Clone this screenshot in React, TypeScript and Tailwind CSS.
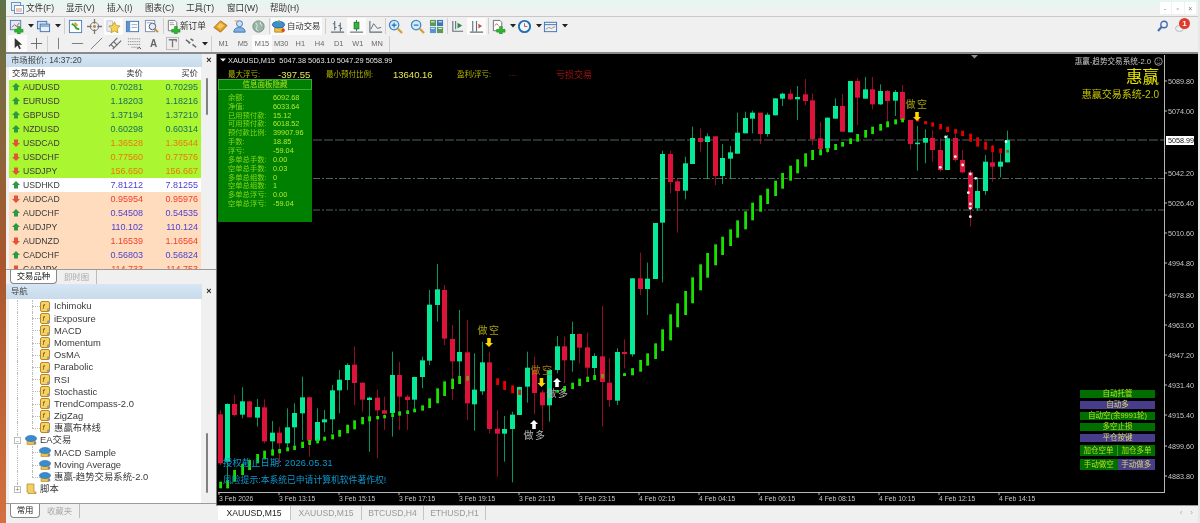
import React from "react";

type C = [number, "g" | "r", number, number, number, number];
// candles read from the chart: X, colour, body top, body bottom, high, low (zoom coordinates)
const A: C[] = [[10,"r",553,700,540,705],[30,"g",522,695,520,775],[52,"r",522,555,495,560],[75,"g",514,554,472,565],[97,"r",514,562,514,562],[120,"g",531,563,507,590],[142,"r",532,634,508,640],[165,"g",608,634,573,660],[187,"r",608,640,590,700],[210,"g",592,640,535,655],[232,"g",549,592,520,650],[255,"g",502,550,440,630],[277,"r",502,632,500,680],[300,"g",576,632,535,640],[322,"g",568,577,540,605],[345,"g",481,568,465,610],[367,"g",449,481,420,550],[390,"g",405,450,400,480],[412,"r",404,459,350,525],[435,"r",458,509,458,545],[457,"g",503,510,500,665],[480,"r",503,541,478,685],[502,"r",541,551,500,600],[525,"g",435,549,365,620],[547,"r",435,500,395,600],[570,"r",500,510,495,600],[592,"g",441,509,440,545],[615,"g",391,441,380,475],[637,"g",224,392,180,405],[660,"g",178,225,102,275],[682,"r",180,326,165,345],[705,"r",327,394,285,510],[727,"g",366,394,240,460],[750,"r",367,520,270,570],[772,"g",479,523,370,602],[795,"g",397,484,335,495],[817,"r",397,597,365,610],[840,"r",596,611,540,740],[862,"g",597,611,558,695],[885,"g",554,597,545,757],[907,"g",471,555,470,555],[930,"g",413,470,365,518],[952,"r",420,489,380,553],[975,"r",487,526,480,600],[997,"g",420,526,420,575],[1020,"g",349,420,318,430],[1042,"r",349,391,320,460],[1065,"g",312,391,275,425],[1087,"r",312,353,310,400],[1110,"r",352,413,308,455],[1132,"g",378,414,370,450],[1155,"r",379,456,228,590],[1177,"r",458,510,385,530],[1200,"g",366,512,355,525],[1222,"r",366,372,328,415],[1245,"g",145,373,145,380]];
const B: C[] = [[86,"r",595,627,518,645],[108,"g",596,627,548,705],[131,"g",429,597,429,597],[153,"g",222,428,212,607],[176,"r",222,306,212,340],[198,"r",304,333,295,458],[221,"g",250,332,230,358],[243,"g",174,252,140,252],[266,"r",174,186,145,215],[288,"g",169,186,160,296],[311,"r",169,288,168,315],[333,"g",234,288,192,312],[356,"g",217,236,198,296],[378,"g",158,221,98,221],[401,"g",114,160,95,160],[423,"g",98,116,92,160],[446,"r",98,162,98,192],[468,"g",104,162,98,170],[491,"g",55,106,55,106],[513,"g",41,56,38,78],[536,"r",41,58,28,60],[558,"g",51,58,18,120],[581,"r",43,63,-3,75],[603,"r",61,177,40,195],[626,"r",175,207,125,220],[648,"g",113,205,113,218],[671,"g",78,116,55,116],[693,"r",78,155,42,155],[716,"g",3,157,3,157],[738,"r",3,53,-6,135],[761,"g",28,56,-9,56],[783,"r",28,73,-9,88],[806,"g",33,73,13,75],[828,"r",33,63,30,125],[851,"g",36,62,30,108],[873,"r",36,120,15,125]];
const D: C[] = [[86,"r",90,162,90,180],[108,"g",158,161,108,242],[131,"g",144,158,118,220],[153,"r",144,180,120,215],[176,"r",180,240,145,245],[198,"g",145,240,135,240],[221,"r",144,210,130,215],[243,"r",210,247,180,250],[266,"r",247,355,240,410],[288,"g",303,355,262,362],[311,"g",215,303,195,315],[333,"r",217,230,165,275],[356,"g",215,230,190,262],[378,"g",150,217,122,217]];
type Da = [number, number, number];
const DA: Da[] = [[8,755,775],[30,750,775],[52,720,755],[75,702,735],[97,690,720],[120,672,700],[142,662,688],[165,658,677],[187,657,670],[210,652,664],[232,647,660],[255,635,654],[277,630,645],[300,628,640],[322,620,632],[345,613,628],[367,600,620],[390,584,610],[412,571,598],[435,561,583],[457,559,574],[480,558,568],[502,555,565],[525,550,561],[547,544,557],[570,541,552],[592,536,547],[615,526,542],[637,505,534],[660,475,520],[682,454,498],[705,446,477],[727,438,462],[1020,480,488],[1042,468,485],[1065,458,477],[1087,446,468],[1110,440,456],[1132,435,450],[1222,430,438],[1245,415,436]];
const DAR: Da[] = [[840,445,465],[862,453,480],[885,466,490]];
const DB: Da[] = [[40,880,888],[63,865,885],[86,840,875],[108,820,857],[131,790,837],[153,748,813],[176,703,781],[198,670,742],[221,633,705],[243,592,670],[266,553,631],[288,519,593],[311,493,556],[333,470,525],[356,448,498],[378,421,473],[401,394,448],[423,368,421],[446,346,395],[468,326,372],[491,302,348],[513,279,326],[536,257,302],[558,238,280],[581,220,260],[603,210,240],[626,208,226],[648,205,216],[671,192,210],[693,186,200],[716,175,192],[738,162,185],[761,150,173],[783,140,162],[806,132,152],[828,124,142],[851,118,133],[873,115,127]];
const DD: Da[] = [[108,88,95],[131,93,103],[153,97,110],[176,102,118],[198,110,126],[221,117,131],[243,122,138],[266,131,155],[288,142,170],[311,155,179],[333,167,186],[356,175,190]];
const WHITE = [[194,141],[178,232],[223,200],[245,225],[268,252],[268,288],[262,308],[268,342],[268,355],[268,380],[284,265],[375,155]];
const PRICES: [string, number][] = [["5089.80",81],["5074.00",111],["5042.20",173],["5026.40",203],["5010.60",233],["4994.80",263],["4978.80",295],["4963.00",325],["4947.20",355],["4931.40",385],["4915.40",415],["4899.60",446],["4883.80",476]];
const TIMES = ["3 Feb 2026","3 Feb 13:15","3 Feb 15:15","3 Feb 17:15","3 Feb 19:15","3 Feb 21:15","3 Feb 23:15","4 Feb 02:15","4 Feb 04:15","4 Feb 06:15","4 Feb 08:15","4 Feb 10:15","4 Feb 12:15","4 Feb 14:15"];

const Candle = ({ c, ox, oy }: { c: C; ox: number; oy: number }) => {
  const x = Math.round(ox + c[0] / 3);
  const col = c[1] === "g" ? "#06ea98" : "#dc143c";
  const t = oy + c[2] / 3, b = oy + c[3] / 3;
  return (
    <g>
      <rect x={x} y={oy + c[4] / 3} width={1} height={(c[5] - c[4]) / 3} fill={col} opacity={0.65} />
      <rect x={x - 2} y={t} width={5} height={Math.max(1.5, b - t)} fill={col} />
    </g>
  );
};
const Dash = ({ d, ox, oy, col }: { d: Da; ox: number; oy: number; col: string }) => (
  <rect x={Math.round(ox + d[0] / 3) - 0.8} y={oy + d[1] / 3} width={2.8} height={(d[2] - d[1]) / 3} fill={col} />
);
const Arrow = ({ x, y, col, up }: { x: number; y: number; col: string; up?: boolean }) => (
  <path d={up ? `M${x} ${y - 5}l4 4h-2.2v5h-3.6v-5h-2.2z` : `M${x} ${y + 5}l4 -4h-2.2v-5h-3.6v5h-2.2z`} fill={col} />
);

function ChartDrawing() {
  return (
    <svg className="absolute inset-0" width={982} height={451} viewBox="216 54 982 451">
      {[140, 178.5, 210].map((y) => (
        <line key={y} x1={312} x2={1163} y1={y} y2={y} stroke="#6f8f7a" strokeWidth={1} strokeDasharray={y === 140 ? "9 2" : "7 2 2 2"} opacity={0.7} />
      ))}
      {A.map((c) => <Candle key={"a" + c[0]} c={c} ox={216} oy={230} />)}
      {B.map((c) => <Candle key={"b" + c[0]} c={c} ox={610} oy={80} />)}
      {D.map((c) => <Candle key={"d" + c[0]} c={c} ox={880} oy={90} />)}
      {DA.map((d) => <Dash key={"da" + d[0]} d={d} ox={216} oy={230} col="#18e000" />)}
      {DAR.map((d) => <Dash key={"dr" + d[0]} d={d} ox={216} oy={230} col="#e80000" />)}
      <Dash d={[750, 438, 452]} ox={216} oy={230} col="#8f8a20" />
      <Dash d={[907, 479, 495]} ox={216} oy={230} col="#c81818" />
      <Dash d={[1155, 432, 445]} ox={216} oy={230} col="#8f8a20" />
      {DB.map((d) => <Dash key={"db" + d[0]} d={d} ox={610} oy={80} col="#18e000" />)}
      {DD.map((d) => <Dash key={"dd" + d[0]} d={d} ox={880} oy={90} col="#e80000" />)}
      <Dash d={[378, 180, 188]} ox={880} oy={90} col="#a05030" />
      {WHITE.map((w) => <circle key={w[0] + "-" + w[1]} cx={880 + w[0] / 3} cy={90 + w[1] / 3} r={1.4} fill="#f4f4f4" />)}
      <Arrow x={488} y={342} col="#ffd800" />
      <Arrow x={540.5} y={382} col="#ffd800" />
      <Arrow x={916} y={116} col="#ffd800" />
      <Arrow x={533} y={425} col="#ffffff" up />
      <Arrow x={556} y={383} col="#ffffff" up />
      <text x={488} y={334} textAnchor="middle" fontSize={10} letterSpacing={1.5} fill="#a8a010">做空</text>
      <text x={541} y={374} textAnchor="middle" fontSize={10} letterSpacing={1.5} fill="#a8780c">做空</text>
      <text x={916} y={108} textAnchor="middle" fontSize={10} letterSpacing={1.5} fill="#a8a010">做空</text>
      <text x={534} y={439} textAnchor="middle" fontSize={10} letterSpacing={1.5} fill="#b4b4b4">做多</text>
      <text x={557} y={397} textAnchor="middle" fontSize={10} letterSpacing={1.5} fill="#b4b4b4">做多</text>
      <path d="M970 55h7l-3.5 3.5z" fill="#8a9094" />
      <path d="M219 58.5h6l-3 3z" fill="#f4f4f4" />
      <circle cx={1157.5} cy={61.5} r={3.8} fill="none" stroke="#b8b8b8" strokeWidth={0.8} />
      <path d="M1155.6 62.8q1.9 1.6 3.8 0M1156 60.2h.8M1158.3 60.2h.8" stroke="#b8b8b8" strokeWidth={0.7} fill="none" />
      <line x1={1163.5} x2={1163.5} y1={55} y2={492.5} stroke="#b8b8b8" />
      <line x1={217} x2={1164} y1={492.5} y2={492.5} stroke="#b8b8b8" />
      {PRICES.map(([t, y]) => (
        <g key={t}>
          <line x1={1164} x2={1166} y1={y} y2={y} stroke="#b8b8b8" />
          <text x={1167} y={y + 2.6} fontSize={7.2} fill="#c8c8c8">{t}</text>
        </g>
      ))}
      <rect x={1165} y={136} width={28} height={9} fill="#fff" />
      <text x={1167} y={143} fontSize={7.2} fill="#111">5058.99</text>
      {TIMES.map((t, i) => (
        <g key={t}>
          <line x1={218 + i * 60} x2={218 + i * 60} y1={492} y2={495} stroke="#b8b8b8" />
          <text x={218 + i * 60} y={501} fontSize={6.8} fill="#c8c8c8">{t}</text>
        </g>
      ))}
    </svg>
  );
}

const INFO: [string, string][] = [["余额:","6092.68"],["净值:","6033.64"],["已用预付款:","15.12"],["可用预付款:","6018.52"],["预付款比例:","39907.96"],["手数:","18.85"],["浮亏:","-59.04"],["多单总手数:","0.00"],["空单总手数:","0.03"],["多单总组数:","0"],["空单总组数:","1"],["多单总浮亏:","0.00"],["空单总浮亏:","-59.04"]];

function EABtn({ t, blue, cls = "" }: { t: string; blue?: boolean; cls?: string }) {
  return (
    <div className={`flex h-[10.5px] flex-1 items-center justify-center text-[7.5px] leading-none ${blue ? "bg-[#483d8b] text-[#d8d868]" : "bg-[#006f00] text-[#b8e028]"} ${cls}`}>{t}</div>
  );
}

function Chart() {
  return (
    <div className="relative h-[451px] overflow-hidden border-l border-[#777] bg-black">
      <ChartDrawing />
      <div className="absolute left-[11px] top-[2px] text-[7.4px] leading-[10px] text-[#e4e4e4] whitespace-pre">XAUUSD,M15  5047.38 5063.10 5047.29 5058.99</div>
      <div className="absolute left-[11px] top-[16px] flex h-[10px] items-center whitespace-nowrap text-[7.5px] leading-none text-[#b4b400]">
        <span className="w-[50px]">最大浮亏:</span>
        <span className="w-[48px] text-[9.5px] text-[#e6e65a]">-397.55</span>
        <span className="w-[67px]">最小预付比例:</span>
        <span className="w-[64px] text-[9.5px] text-[#e6e65a]">13640.16</span>
        <span className="w-[52px]">盈利/浮亏:</span>
        <span className="w-[47px] text-[#8a1010]">---</span>
        <span className="text-[9px] text-[#a01010]">亏损交易</span>
      </div>
      <div className="absolute left-[1px] top-[25px] flex h-[143px] w-[94px] flex-col bg-[#008000]">
        <div className="flex h-[11px] items-center justify-center border border-[#3ca83c] text-[7.5px] leading-none text-[#b0e028]">信息面板隐藏</div>
        <div className="mt-[3px] flex flex-col">
          {INFO.map(([a, b]) => (
            <div key={a} className="flex h-[8.87px] items-center text-[7.3px] leading-none">
              <span className="w-[45px] pl-[10px] box-content whitespace-nowrap text-[#84d818]">{a}</span>
              <span className="text-[#b4ec30]">{b}</span>
            </div>
          ))}
        </div>
      </div>
      <div className="absolute right-[47px] top-[2px] text-[7.6px] leading-[11px] text-[#c8c8c8]">惠赢-趋势交易系统-2.0</div>
      <div className="absolute right-[39px] top-[13px] flex flex-col items-end">
        <div className="text-[16.5px] leading-[20px] text-[#e4e400]">惠赢</div>
        <div className="text-[10px] leading-[16px] text-[#c4c400]">惠赢交易系统-2.0</div>
      </div>
      <div className="absolute left-[6px] top-[403px] text-[9.2px] leading-[12px] tracking-[0.2px] text-[#0a9ad0]">授权截止日期: 2026.05.31</div>
      <div className="absolute left-[6px] top-[420px] text-[8.8px] leading-[12px] text-[#0a9ad0]">风险提示:本系统已申请计算机软件著作权!</div>
      <div className="absolute left-[863px] top-[336px] flex w-[75px] flex-col gap-[3.5px]">
        <EABtn t="自动托管" />
        <EABtn t="自动多" blue />
        <EABtn t="自动空(余9991轮)" />
        <EABtn t="多空止损" />
        <EABtn t="平仓按键" blue />
        <div className="flex"><EABtn t="加仓空单" cls="border-r border-[#2aa02a]" /><EABtn t="加仓多单" /></div>
        <div className="flex"><EABtn t="手动做空" /><EABtn t="手动做多" blue /></div>
      </div>
    </div>
  );
}

function Ico({ n }: { n: string }) {
  const s = { width: 15, height: 15, viewBox: "0 0 16 16", fill: "none" } as const;
  const plus = <path d="M9 8h3v3h3v3h-3v2H9v-2H6v-3h3z" fill="#2fb52f" stroke="#1c7f1c" strokeWidth={0.5} />;
  switch (n) {
    case "new": return <svg {...s}><rect x={1.5} y={1.5} width={11} height={10} fill="#dfeaf6" stroke="#4f7fb8" /><path d="M3 9l3-3 2 2 3-4" stroke="#c84b3a" />{plus}</svg>;
    case "prof": return <svg {...s}><rect x={1.5} y={2.5} width={10} height={8} fill="#cfe0f5" stroke="#3d74b5" /><rect x={4.5} y={5.5} width={10} height={8} fill="#e8f0fa" stroke="#3d74b5" /><path d="M5 7.5h9" stroke="#3d74b5" /></svg>;
    case "mw": return <svg {...s}><rect x={1.5} y={1.5} width={13} height={13} fill="#fff" stroke="#4f7fb8" /><path d="M4 5l3 2 2 3 3 1" stroke="#2fa52f" strokeWidth={2} /><path d="M7 4l3 3" stroke="#e0a020" strokeWidth={2} /></svg>;
    case "nav": return <svg {...s}><circle cx={8} cy={8} r={4.5} fill="#eee" stroke="#777" /><path d="M8 0v5M8 11v5M0 8h5M11 8h5" stroke="#777" strokeWidth={1.4} /><circle cx={8} cy={8} r={1.5} fill="#b8862b" /></svg>;
    case "fav": return <svg {...s}><rect x={1} y={2} width={6} height={11} fill="#e8eef6" stroke="#9ab" strokeWidth={0.6} /><path d="M9 3l1.9 3.9 4.1.6-3 3 .7 4.2L9 12.7 5.3 14.7l.7-4.2-3-3 4.1-.6z" fill="#f6d452" stroke="#c09020" strokeWidth={0.8} /></svg>;
    case "term": return <svg {...s}><rect x={1.5} y={2.5} width={13} height={11} fill="#fff" stroke="#3d74b5" /><rect x={2} y={3} width={3.5} height={10} fill="#5b92d0" /><path d="M7 6h6M7 9h6" stroke="#9ab" /></svg>;
    case "test": return <svg {...s}><rect x={1.5} y={1.5} width={10} height={12} fill="#fff" stroke="#7a8ea5" /><circle cx={9} cy={8} r={3.5} fill="#dfeefa" stroke="#557" /><path d="M11.5 10.5l3.5 3.5" stroke="#c89030" strokeWidth={2} /><path d="M3 4h6" stroke="#9ab" /></svg>;
    case "order": return <svg {...s}><path d="M2.5 1.5h7l2 2v9h-9z" fill="#fff" stroke="#777" /><path d="M4 4h4M4 6h5" stroke="#999" />{plus}</svg>;
    case "gold": return <svg {...s}><path d="M1 9l7-7 7 5-7 7z" fill="#e0a020" stroke="#a87018" /><path d="M4 8l4-4 4 3-4 4z" fill="#f5c860" /></svg>;
    case "ppl": return <svg {...s}><circle cx={8} cy={5} r={3.2} fill="#cfe0f5" stroke="#3d74b5" /><path d="M2 14c0-4 3-5 6-5s6 1 6 5z" fill="#7fb0e0" stroke="#3d74b5" /><path d="M3 2h3" stroke="#e0a020" /></svg>;
    case "globe": return <svg {...s}><circle cx={8} cy={8} r={6} fill="#9bb5a8" stroke="#6c8a7c" /><path d="M5 4q3 3 1 5t2 4M10 3q-1 3 2 4" stroke="#eaeaea" /></svg>;
    case "ea": return <svg {...s}><path d="M4 9h9v5H4z" fill="#f0c040" stroke="#b88a20" /><ellipse cx={8} cy={6} rx={6.5} ry={3.5} fill="#3f8fd0" stroke="#1f6aa8" /><path d="M5 3l4-2 2 3" fill="#60b060" /><circle cx={13} cy={12} r={1.8} fill="#e04030" /></svg>;
    case "bar": return <svg {...s}><path d="M5 2v10M3 5h2M5 9h2M11 4v9M9 7h2M11 10h2M1 14h14" stroke="#60707a" strokeWidth={1.2} /></svg>;
    case "cnd": return <svg {...s}><path d="M8 1v12" stroke="#2a7a3a" /><rect x={5.5} y={3.5} width={5} height={7} fill="#38b04a" stroke="#1c7f1c" /><path d="M1 14h14" stroke="#60707a" strokeWidth={1.2} /></svg>;
    case "line": return <svg {...s}><path d="M2 2v12h13" stroke="#60707a" strokeWidth={1.2} /><path d="M3 11l3-6 4 5 4-1" stroke="#5a6a72" /></svg>;
    case "zi": case "zo": return <svg {...s}><circle cx={6.5} cy={6.5} r={5} fill="#d4ecfa" stroke="#3d8ac8" strokeWidth={1.4} /><path d="M10.5 10.5l4.5 4.5" stroke="#d8a030" strokeWidth={2.4} /><path d={n === "zi" ? "M4 6.5h5M6.5 4v5" : "M4 6.5h5"} stroke="#2a6aa0" strokeWidth={1.2} /></svg>;
    case "tile": return <svg {...s}><rect x={1} y={1} width={6.5} height={6.5} fill="#5a9a5a" /><rect x={8.5} y={1} width={6.5} height={6.5} fill="#3d74b5" /><rect x={1} y={8.5} width={6.5} height={6.5} fill="#5b92d0" /><rect x={8.5} y={8.5} width={6.5} height={6.5} fill="#5a9a5a" /><path d="M2 3h4M10 3h4M2 10h4M10 10h4" stroke="#fff" /></svg>;
    case "as": return <svg {...s}><path d="M3 2v11h11M6 2v9" stroke="#60707a" strokeWidth={1.2} /><path d="M8 4l5 3-5 3z" fill="#2a8a4a" /></svg>;
    case "sh": return <svg {...s}><path d="M4 2v11M8 2v11M1 14h14" stroke="#60707a" strokeWidth={1.2} /><path d="M10 5l4 2.5-4 2.5z" fill="#c85040" /></svg>;
    case "ind": return <svg {...s}><path d="M2.5 1.5h7l2 2v9h-9z" fill="#fff" stroke="#667" /><path d="M4 7l2-2 2 2" stroke="#c85040" />{plus}</svg>;
    case "clk": return <svg {...s}><circle cx={8} cy={8} r={6} fill="#eef6fc" stroke="#1f6fb0" strokeWidth={2} /><path d="M8 4.5V8h3" stroke="#c85040" /></svg>;
    case "tpl": return <svg {...s}><rect x={1.5} y={3.5} width={13} height={10} fill="#eaf2fb" stroke="#3d74b5" /><path d="M1.5 6h13" stroke="#3d74b5" /><path d="M3 11l3-2 3 1 4-2" stroke="#d08030" /></svg>;
    case "ptr": return <svg {...s}><path d="M5 2v11l3-3 2 4 1.6-.8-2-3.9H13z" fill="#333" /></svg>;
    case "x": return <svg {...s}><path d="M8 2v12M2 8h12" stroke="#666" /></svg>;
    case "v": return <svg {...s}><path d="M8 2v12" stroke="#777" /></svg>;
    case "h": return <svg {...s}><path d="M2 8h12" stroke="#777" /></svg>;
    case "tr": return <svg {...s}><path d="M2 14L14 2" stroke="#777" /></svg>;
    case "ch": return <svg {...s}><path d="M1 11L10 2M5 14l9-9M3 9l4 4M6 6l4 4" stroke="#666" strokeWidth={1.2} /></svg>;
    case "fib": return <svg {...s}><path d="M1 3h13M1 6h13M1 9h13M5 12h9" stroke="#777" strokeDasharray="1 1" /><path d="M11 14l2-2 2 2" stroke="#444" /></svg>;
    case "tbox": return <svg {...s}><rect x={1.5} y={1.5} width={13} height={13} fill="#eee" stroke="#bbb" /><path d="M4 4h8v2M8 4v8" stroke="#777" strokeWidth={1.4} /></svg>;
    case "arr": return <svg {...s}><path d="M2 4l4 3-1 1M9 9l4 3M7 3l3 2" stroke="#666" strokeWidth={1.6} /></svg>;
    default: return null;
  }
}

const Tri = () => <svg width={6} height={4} viewBox="0 0 6 4"><path d="M0 0h6L3 3.5z" fill="#222" /></svg>;
const Sep = ({ w = "w-[5px]" }: { w?: string }) => <div className={`flex h-[16px] shrink-0 justify-center ${w}`}><div className="w-px bg-[#cfcfcf]" /></div>;
const Btn = ({ n, hi, w = "w-[19px]" }: { n: string; hi?: boolean; w?: string }) => (
  <div className={`flex h-[17px] shrink-0 items-center justify-center ${w} ${hi ? "bg-[#fbfbfb]" : ""}`}><Ico n={n} /></div>
);
const Drop = ({ n }: { n: string }) => (
  <div className="flex h-[17px] w-[26px] shrink-0 items-center gap-[4px]"><Ico n={n} /><Tri /></div>
);

function Top() {
  const menu: [string, string][] = [["文件(F)", "w-[40px]"], ["显示(V)", "w-[41px]"], ["插入(I)", "w-[38px]"], ["图表(C)", "w-[41px]"], ["工具(T)", "w-[41px]"], ["窗口(W)", "w-[43px]"], ["帮助(H)", "w-[40px]"]];
  return (
    <div className="flex h-[54px] shrink-0 flex-col border-b-2 border-[#8a8a8a] bg-[#f0f0f0]">
      <div className="flex h-[17px] shrink-0 items-center border-b border-[#c8c8c8] bg-gradient-to-b from-[#e6f6f2] to-[#f2f0f0]">
        <div className="flex w-[20px] justify-center pl-[2px]">
          <svg width={13} height={12} viewBox="0 0 13 12"><rect x={.5} y={.5} width={9} height={8} fill="#e8f0fa" stroke="#6f93bd" /><rect x={3.5} y={3.5} width={9} height={8} fill="#fff" stroke="#6f93bd" /><path d="M5 7h6M5 9h6" stroke="#e08a80" /></svg>
        </div>
        {menu.map(([m, w]) => <div key={m} className={`pt-[1px] text-[8.6px] leading-none text-[#333] ${w}`}>{m}</div>)}
        <div className="flex-1" />
        <div className="flex h-[13px] items-center gap-[1px] pr-[2px]">
          {["-", "▫", "×"].map((t) => <div key={t} className="flex h-[12px] w-[11.5px] items-center justify-center bg-white text-[7px] leading-none text-[#777]">{t}</div>)}
        </div>
      </div>
      <div className="flex h-[18px] shrink-0 items-center pl-[3px]">
        <Drop n="new" /><div className="w-[1px]" /><Drop n="prof" />
        <Sep w="w-[4px]" />
        <Btn n="mw" /><Btn n="nav" /><Btn n="fav" hi /><Btn n="term" /><Btn n="test" />
        <Sep />
        <div className="flex h-[17px] w-[45px] shrink-0 items-center text-[8.6px] leading-none text-[#333]"><Ico n="order" /><span className="-ml-[1px] whitespace-nowrap">新订单</span></div>
        <Btn n="gold" /><Btn n="ppl" /><Btn n="globe" />
        <Sep w="w-[3px]" />
        <div className="flex h-[17px] w-[51px] shrink-0 items-center gap-[1px] bg-[#fbfbfb] text-[8.4px] leading-none text-[#333]"><Ico n="ea" /><span className="whitespace-nowrap">自动交易</span></div>
        <Sep w="w-[6px]" />
        <Btn n="bar" /><Btn n="cnd" hi /><Btn n="line" />
        <Sep w="w-[1px]" />
        <Btn n="zi" /><div className="w-[3px]" /><Btn n="zo" /><Btn n="tile" />
        <Sep w="w-[2px]" />
        <Btn n="as" /><Btn n="sh" hi />
        <Sep w="w-[5px]" />
        <Drop n="ind" /><Drop n="clk" /><Drop n="tpl" />
        <div className="flex-1" />
        <svg width={12} height={12} viewBox="0 0 12 12" className="mr-[6px]"><circle cx={7} cy={4.5} r={3.2} fill="none" stroke="#4a6ab0" strokeWidth={1.4} /><path d="M4.5 7L1 11" stroke="#4a6ab0" strokeWidth={2} /></svg>
        <div className="relative mr-[9px] h-[14px] w-[14px]">
          <svg width={9} height={8} viewBox="0 0 9 8" className="absolute bottom-0 left-0"><ellipse cx={4.5} cy={3.5} rx={4} ry={3} fill="#eee" stroke="#bbb" /></svg>
          <div className="absolute -right-[1px] -top-[1px] flex h-[11px] w-[11px] items-center justify-center rounded-full bg-[#e03a2a] text-[8px] font-bold leading-none text-white">1</div>
        </div>
      </div>
      <div className="flex h-[17px] shrink-0 items-center pl-[2px]">
        <Btn n="ptr" hi /><Btn n="x" />
        <Sep w="w-[3px]" />
        <Btn n="v" /><Btn n="h" /><Btn n="tr" /><Btn n="ch" /><Btn n="fib" />
        <div className="flex h-[17px] w-[19px] items-center justify-center text-[10px] font-bold leading-none text-[#666]">A</div>
        <Btn n="tbox" /><Btn n="arr" />
        <div className="flex w-[7px] justify-center"><Tri /></div>
        <Sep w="w-[6px]" />
        {["M1", "M5", "M15", "M30", "H1", "H4", "D1", "W1", "MN"].map((t) => (
          <div key={t} className={`flex h-[17px] w-[19.2px] items-center justify-center text-[7.4px] leading-none text-[#666] ${t === "M15" ? "bg-[#fbfbfb]" : ""}`}>{t}</div>
        ))}
        <Sep />
      </div>
    </div>
  );
}

const UP = "up", DN = "dn";
const ROWS: [string, string, string, string, string][] = [
  ["AUDUSD","0.70281","0.70295",UP,"g"],["EURUSD","1.18203","1.18216",UP,"g"],["GBPUSD","1.37194","1.37210",UP,"g"],["NZDUSD","0.60298","0.60314",UP,"g"],["USDCAD","1.36528","1.36544",DN,"g"],["USDCHF","0.77560","0.77576",DN,"g"],["USDJPY","156.650","156.667",DN,"g"],["USDHKD","7.81212","7.81255",UP,"w"],["AUDCAD","0.95954","0.95976",DN,"p"],["AUDCHF","0.54508","0.54535",UP,"p"],["AUDJPY","110.102","110.124",UP,"p"],["AUDNZD","1.16539","1.16564",DN,"p"],["CADCHF","0.56803","0.56824",UP,"p"],["CADJPY","114.733","114.753",DN,"p"],
];

function PanelHead({ t, cls }: { t: string; cls: string }) {
  return (
    <div className={`flex shrink-0 items-center ${cls}`}>
      <div className="flex h-full w-[196px] items-center bg-gradient-to-b from-[#d6e6f4] to-[#c8dbec] pl-[5px] text-[8.4px] leading-none text-[#444]">{t}</div>
      <div className="flex-1 text-center text-[9px] font-bold leading-none text-[#222]">×</div>
    </div>
  );
}
function Scroll({ cls }: { cls: string }) {
  return <div className={`absolute left-[200px] w-[2px] rounded-sm bg-[#808080] ${cls}`} />;
}
function Tabs({ a, b, aw, bw }: { a: string; b: string; aw: string; bw: string }) {
  return (
    <div className="flex h-[15px] shrink-0 border-t border-[#9a9a9a] pl-[4px]">
      <div className={`flex h-[14px] items-center justify-center rounded-b-sm border border-t-0 border-[#888] bg-white text-[8.4px] leading-none text-[#222] ${aw}`}>{a}</div>
      <div className={`flex h-[14px] items-center justify-center border-r border-[#bbb] text-[8.4px] leading-none text-[#aaa] ${bw}`}>{b}</div>
    </div>
  );
}

function Market() {
  return (
    <div className="relative flex h-[230px] shrink-0 flex-col">
      <PanelHead t="市场报价: 14:37:20" cls="h-[13px]" />
      <div className="ml-[3px] flex h-[13px] w-[192px] shrink-0 items-center bg-white text-[8.4px] leading-none text-[#333]">
        <div className="w-[82px] pl-[3px]">交易品种</div>
        <div className="w-[54px] pr-[2px] text-right">卖价</div>
        <div className="w-[55px] pr-[2px] text-right">买价</div>
      </div>
      <div className="ml-[3px] h-[190px] w-[192px] overflow-hidden">
        {ROWS.map(([s, a, b, d, bg]) => {
          const rowBg = bg === "g" ? "bg-[#aaf630]" : bg === "w" ? "bg-white" : "bg-[#ffdcbd]";
          const col = d === UP ? (bg === "g" ? "text-[#1b6d5c]" : "text-[#4d3fd0]") : bg === "g" ? "text-[#e87a0c]" : "text-[#f03f2f]";
          return (
            <div key={s} className={`flex h-[14px] items-center text-[9px] leading-none ${rowBg}`}>
              <div className="flex w-[82px] items-center gap-[3px] pl-[3px] text-[8.7px] text-[#3a3a3a]">
                <svg width={8} height={8} viewBox="0 0 8 8"><path d={d === UP ? "M4 0l4 4H6v3.5H2V4H0z" : "M4 8L0 4h2V.5h4V4h2z"} fill={d === UP ? "#2b9a42" : "#e2543a"} /></svg>
                {s}
              </div>
              <div className={`w-[54px] pr-[2px] text-right ${col}`}>{a}</div>
              <div className={`w-[55px] pr-[2px] text-right ${col}`}>{b}</div>
            </div>
          );
        })}
      </div>
      <Scroll cls="top-[24px] h-[37px]" />
      <Tabs a="交易品种" b="即时图" aw="w-[47px]" bw="w-[40px]" />
    </div>
  );
}

const F = () => (
  <svg width={11} height={11} viewBox="0 0 11 11" className="shrink-0">
    <rect x={.5} y={.5} width={9} height={10} rx={1.5} fill="#f5d262" stroke="#b8862b" />
    <text x={2.6} y={8} fontSize={7.5} fontStyle="italic" fill="#6a4a10">f</text>
    <circle cx={8.5} cy={8.8} r={1.6} fill="#999" />
  </svg>
);
const Hat = () => (
  <svg width={12} height={10} viewBox="0 0 12 10" className="shrink-0">
    <rect x={2} y={5} width={8} height={4.5} fill="#ecc24a" stroke="#a8842a" strokeWidth={0.6} />
    <ellipse cx={6} cy={3.5} rx={5.6} ry={3} fill="#3b8cce" stroke="#1f6aa8" strokeWidth={0.6} />
    <circle cx={10} cy={8} r={1.4} fill="#888" />
  </svg>
);
const Sq = ({ p }: { p?: boolean }) => (
  <div className="absolute left-[5px] top-[3px] flex h-[7px] w-[7px] items-center justify-center border border-[#bbb] bg-white text-[7px] leading-none text-[#777]">{p ? "+" : "-"}</div>
);
const TREE = ["Ichimoku","iExposure","MACD","Momentum","OsMA","Parabolic","RSI","Stochastic","TrendCompass-2.0","ZigZag","惠赢布林线"];
const EAS = ["MACD Sample","Moving Average","惠赢-趋势交易系统-2.0"];

function Nav() {
  const rowCls = "relative flex h-[12.2px] items-center text-[9.4px] leading-none text-[#3a3a3a] whitespace-nowrap";
  return (
    <div className="relative flex flex-1 flex-col">
      <PanelHead t="导航" cls="h-[15px]" />
      <div className="ml-[3px] h-[204px] w-[192px] bg-white pt-[1px]">
        {TREE.map((t, i) => (
          <div key={t} className={rowCls}>
            <span className="absolute left-[8px] top-0 h-full border-l border-dotted border-[#bbb]" />
            <span className={`absolute left-[23px] top-0 border-l border-dotted border-[#bbb] ${i === 10 ? "h-1/2" : "h-full"}`} />
            <span className="absolute left-[23px] top-1/2 w-[8px] border-t border-dotted border-[#bbb]" />
            <div className="ml-[31px] mr-[3px]"><F /></div>{t}
          </div>
        ))}
        <div className={rowCls}>
          <span className="absolute left-[8px] top-0 h-full border-l border-dotted border-[#bbb]" />
          <Sq />
          <div className="ml-[16px] mr-[3px]"><Hat /></div>EA交易
        </div>
        {EAS.map((t, i) => (
          <div key={t} className={rowCls}>
            <span className="absolute left-[8px] top-0 h-full border-l border-dotted border-[#bbb]" />
            <span className={`absolute left-[23px] top-0 border-l border-dotted border-[#bbb] ${i === 2 ? "h-1/2" : "h-full"}`} />
            <span className="absolute left-[23px] top-1/2 w-[8px] border-t border-dotted border-[#bbb]" />
            <div className="ml-[30px] mr-[3px]"><Hat /></div>{t}
          </div>
        ))}
        <div className={rowCls}>
          <span className="absolute left-[8px] top-0 h-1/2 border-l border-dotted border-[#bbb]" />
          <Sq p />
          <div className="ml-[16px] mr-[3px]">
            <svg width={12} height={11} viewBox="0 0 12 11"><path d="M2 1h7v8h2v1.5H3V9H2z" fill="#f0d060" stroke="#a8842a" strokeWidth={0.7} /></svg>
          </div>脚本
        </div>
      </div>
      <Scroll cls="top-[149px] h-[60px]" />
      <Tabs a="常用" b="收藏夹" aw="w-[30px]" bw="w-[40px]" />
    </div>
  );
}

function BottomTabs() {
  const tabs: [string, string][] = [["XAUUSD,M15", "w-[73px]"], ["XAUUSD,M15", "w-[71px]"], ["BTCUSD,H4", "w-[62px]"], ["ETHUSD,H1", "w-[62px]"]];
  return (
    <div className="flex h-[18px] items-start border-t border-[#999] bg-[#f0f0f0] pl-[2px]">
      {tabs.map(([t, w], i) => (
        <div key={i} className={`flex h-[14px] items-center justify-center border-r border-[#c4c4c4] text-[8.6px] leading-none ${w} ${i === 0 ? "bg-white text-[#222]" : "text-[#999]"}`}>{t}</div>
      ))}
      <div className="flex-1" />
      <div className="flex h-[14px] items-center gap-[8px] pr-[5px] text-[8px] leading-none text-[#aaa]"><span>‹</span><span>›</span></div>
    </div>
  );
}

export default function App() {
  return (
    <div className="flex h-[523px] w-[1200px] overflow-hidden bg-[#f0f0f0] blur-[0.45px] [font-family:'Liberation_Sans','Noto_Sans_CJK_SC',sans-serif]">
      <div className="w-[6px] shrink-0 bg-gradient-to-b from-[#5f7148] via-[#a8562e] to-[#d4703f]" />
      <div className="flex min-w-0 flex-1 flex-col">
        <Top />
        <div className="flex flex-1">
          <div className="flex w-[210px] shrink-0 flex-col">
            <Market />
            <Nav />
          </div>
          <div className="flex flex-1 flex-col">
            <Chart />
            <BottomTabs />
          </div>
        </div>
      </div>
      <div className="w-[2px] shrink-0 bg-[#e8e8e8]" />
    </div>
  );
}
